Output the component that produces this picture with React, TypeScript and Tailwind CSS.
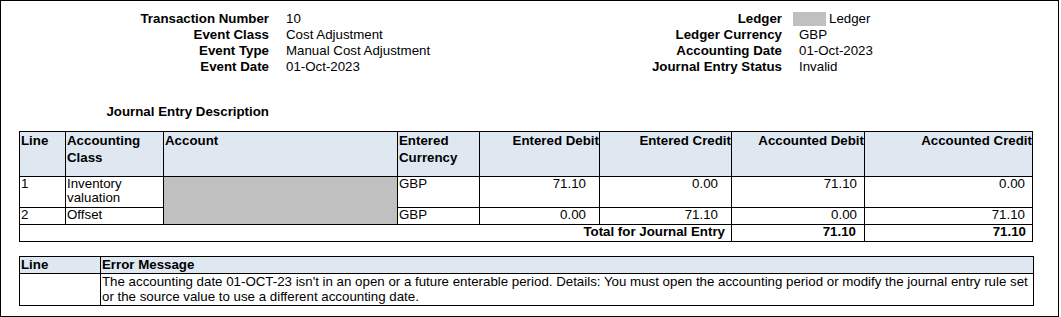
import React from 'react';

// Journal entry detail — header fields, lines table, error table

const LEFT_FIELDS: [string, string][] = [
  ['Transaction Number', '10'],
  ['Event Class', 'Cost Adjustment'],
  ['Event Type', 'Manual Cost Adjustment'],
  ['Event Date', '01-Oct-2023'],
];

const RIGHT_FIELDS: [string, string][] = [
  ['Ledger', 'Ledger'],
  ['Ledger Currency', 'GBP'],
  ['Accounting Date', '01-Oct-2023'],
  ['Journal Entry Status', 'Invalid'],
];

const LINES = [
  { line: '1', cls: 'Inventory valuation', cur: 'GBP', ed: '71.10', ec: '0.00', ad: '71.10', ac: '0.00' },
  { line: '2', cls: 'Offset', cur: 'GBP', ed: '0.00', ec: '71.10', ad: '0.00', ac: '71.10' },
];

const th = 'border border-black bg-[#dfe8f1] font-bold align-top p-0 pl-[1px]';
const td = 'border border-black align-top p-0 pl-[1px] pb-[2px]';

export default function App() {
  return (
    <div className="w-[1059px] h-[317px] border border-black bg-white text-black text-[13.3px] leading-[16px] font-['Liberation_Sans',Arial,sans-serif] pt-[10px]">
      {/* Header fields */}
      <div className="flex">
        <div className="grid grid-cols-[268px_1fr] gap-x-[17px] w-[600px]">
          {LEFT_FIELDS.map(([label, value]) => (
            <React.Fragment key={label}>
              <span className="font-bold text-right">{label}</span>
              <span>{value}</span>
            </React.Fragment>
          ))}
        </div>
        <div className="grid grid-cols-[181px_1fr] gap-x-[17px]">
          {RIGHT_FIELDS.map(([label, value], i) => (
            <React.Fragment key={label}>
              <span className="font-bold text-right">{label}</span>
              <span className="flex items-center">
                {i === 0 && <span className="inline-block w-[33px] h-[14px] bg-[#c0c0c0] -ml-[6px] mr-[3px]" />}
                {value}
              </span>
            </React.Fragment>
          ))}
        </div>
      </div>

      <div className="w-[268px] text-right font-bold mt-[29px]">Journal Entry Description</div>

      {/* Journal lines */}
      <table className="ml-[18px] mt-[11px] border-collapse table-fixed w-[1013px] leading-[14px]">
        <colgroup>
          <col className="w-[46px]" />
          <col className="w-[98px]" />
          <col className="w-[234px]" />
          <col className="w-[82px]" />
          <col className="w-[120px]" />
          <col className="w-[132px]" />
          <col className="w-[133px]" />
          <col className="w-[168px]" />
        </colgroup>
        <thead>
          <tr className="h-[45px] leading-[17px]">
            <th className={`${th} text-left`}>Line</th>
            <th className={`${th} text-left`}>Accounting Class</th>
            <th className={`${th} text-left`}>Account</th>
            <th className={`${th} text-left`}>Entered Currency</th>
            <th className={`${th} text-right pr-0`}>Entered Debit</th>
            <th className={`${th} text-right pr-0`}>Entered Credit</th>
            <th className={`${th} text-right pr-0`}>Accounted Debit</th>
            <th className={`${th} text-right pr-0`}>Accounted Credit</th>
          </tr>
        </thead>
        <tbody>
          {LINES.map((r, i) => (
            <tr key={r.line}>
              <td className={td}>{r.line}</td>
              <td className={td}>{r.cls}</td>
              {i === 0 && <td rowSpan={2} className="border border-black bg-[#c0c0c0] p-0" />}
              <td className={td}>{r.cur}</td>
              <td className={`${td} text-right pr-[13px]`}>{r.ed}</td>
              <td className={`${td} text-right pr-[13px]`}>{r.ec}</td>
              <td className={`${td} text-right pr-[7px]`}>{r.ad}</td>
              <td className={`${td} text-right pr-[7px]`}>{r.ac}</td>
            </tr>
          ))}
          <tr className="font-bold">
            <td colSpan={6} className={`${td} text-right pr-[6px]`}>Total for Journal Entry</td>
            <td className={`${td} text-right pr-[8px]`}>71.10</td>
            <td className={`${td} text-right pr-[6px]`}>71.10</td>
          </tr>
        </tbody>
      </table>

      {/* Errors */}
      <table className="ml-[18px] mt-[14px] border-collapse table-fixed w-[1015px] leading-[15px]">
        <colgroup>
          <col className="w-[81px]" />
          <col />
        </colgroup>
        <thead>
          <tr className="leading-[16px]">
            <th className={`${th} text-left`}>Line</th>
            <th className={`${th} text-left`}>Error Message</th>
          </tr>
        </thead>
        <tbody>
          <tr>
            <td className="border border-black p-0 pl-[1px] pb-[1px] align-top" />
            <td className="border border-black p-0 pl-[1px] pb-[1px] align-top">
              The accounting date 01-OCT-23 isn't in an open or a future enterable period. Details: You must open the accounting period or modify the journal entry rule set or the source value to use a different accounting date.
            </td>
          </tr>
        </tbody>
      </table>
    </div>
  );
}
